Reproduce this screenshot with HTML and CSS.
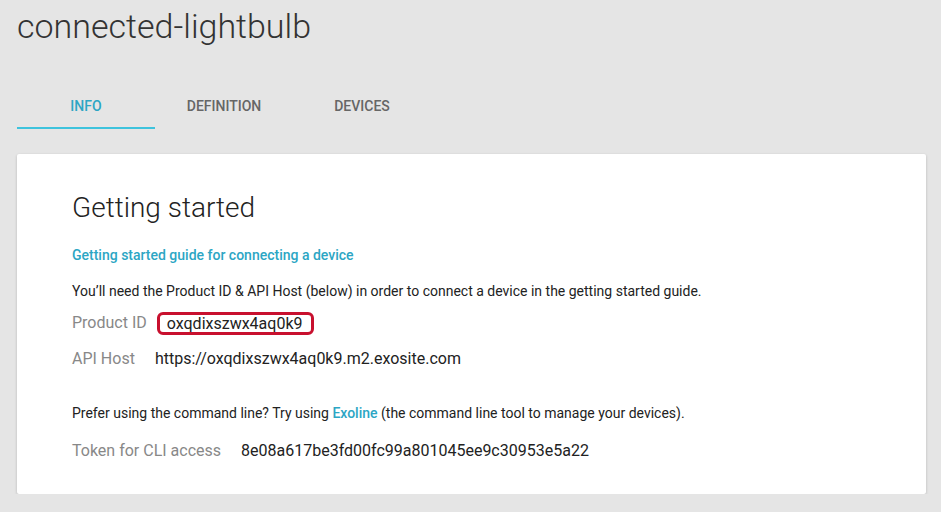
FILE: index.html
```html
<!DOCTYPE html>
<html>
<head>
<meta charset="utf-8">
<link rel="stylesheet" href="styles.css">
</head>
<body>
<div class="page">
  <h1 class="title">connected-lightbulb</h1>
  <nav class="tabs">
    <div class="tab active">INFO</div>
    <div class="tab">DEFINITION</div>
    <div class="tab">DEVICES</div>
  </nav>
  <section class="card">
    <h2 class="card-title">Getting started</h2>
    <a class="guide-link">Getting started guide for connecting a device</a>
    <p class="text">You’ll need the Product ID &amp; API Host (below) in order to connect a device in the getting started guide.</p>
    <div class="row first">
      <span class="label">Product ID</span>
      <span class="value boxed">oxqdixszwx4aq0k9</span>
    </div>
    <div class="row">
      <span class="label">API Host</span>
      <span class="value">https://oxqdixszwx4aq0k9.m2.exosite.com</span>
    </div>
    <p class="text cli">Prefer using the command line? Try using <a class="inline-link">Exoline</a> (the command line tool to manage your devices).</p>
    <div class="row token">
      <span class="label">Token for CLI access</span>
      <span class="value">8e08a617be3fd00fc99a801045ee9c30953e5a22</span>
    </div>
  </section>
</div>
</body>
</html>
```
FILE: styles.css
```css
html, body {
  margin: 0;
  padding: 0;
  background: #e5e5e5;
  font-family: Roboto, "Noto Sans", sans-serif;
}
.page {
  padding: 0 15px 0 17px;
}
.title {
  margin: 0;
  padding-top: 6px;
  font-size: 34px;
  font-weight: 300;
  color: #333;
  line-height: 40px;
}
.tabs {
  display: flex;
  margin-top: 44px;
}
.tab {
  width: 138px;
  text-align: center;
  font-size: 14px;
  font-weight: 500;
  color: #666;
  height: 39px;
  line-height: 32px;
  box-sizing: border-box;
}
.tab.active {
  color: #2ca6c4;
  border-bottom: 2px solid #3ec3dd;
}
.card {
  margin-top: 25px;
  background: #fff;
  border-radius: 2px;
  box-shadow: 0 1px 3px rgba(0,0,0,0.2);
  padding: 36px 55px 36px 55px;
  height: 340px;
  box-sizing: border-box;
}
.card-title {
  margin: 0;
  font-size: 28px;
  font-weight: 300;
  color: #222;
  line-height: 36px;
}
.guide-link {
  display: block;
  margin-top: 20px;
  font-size: 14px;
  font-weight: 500;
  color: #2ca6c4;
  line-height: 18px;
}
.text {
  margin: 18px 0 0;
  font-size: 14px;
  color: #222;
  line-height: 18px;
}
.inline-link {
  color: #2ca6c4;
  font-weight: 500;
}
.row {
  display: flex;
  align-items: center;
  gap: 20px;
  margin-top: 12px;
  font-size: 16px;
  line-height: 24px;
}
.row.first {
  margin-top: 11px;
}
.label {
  color: #888;
}
.value {
  color: #222;
}
.boxed {
  border: 3px solid #c8102e;
  border-radius: 6px;
  margin-left: -10px;
  padding: 0 8px 0 7px;
  line-height: 17px;
}
.text.cli {
  margin-top: 33px;
}
.row.token {
  margin-top: 17px;
}
```
